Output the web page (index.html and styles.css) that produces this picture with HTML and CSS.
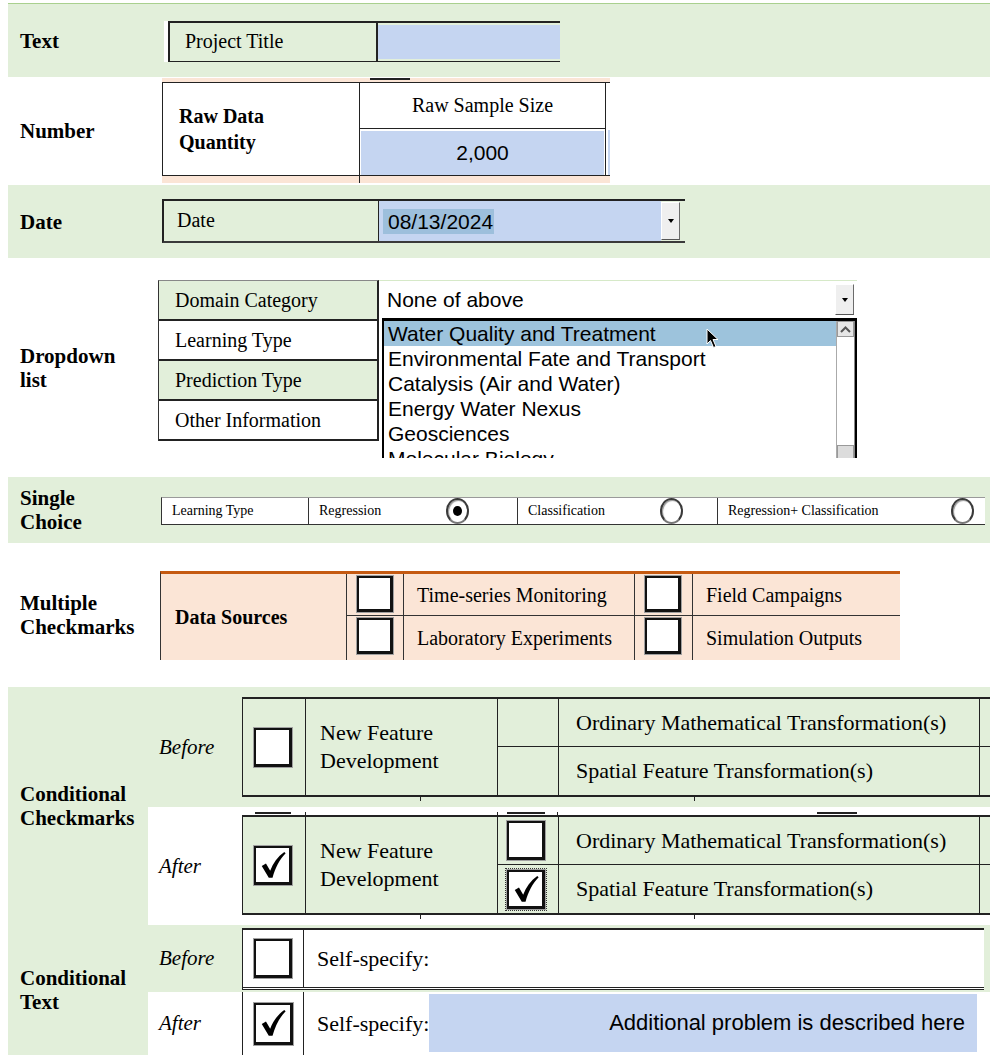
FILE: index.html
```html
<!DOCTYPE html>
<html lang="en">
<head>
    <meta charset="UTF-8">
    <meta name="viewport" content="width=device-width, initial-scale=1.0">
    <title>Form Field Types</title>
    <link rel="stylesheet" href="styles.css">
</head>
<body>
<div class="page">

    <!-- Text -->
    <div class="row row-text green">
        <div class="row-label">Text</div>
        <div class="row-body">
            <div class="snip-text">
                <div class="text-name">Project Title</div>
                <div class="text-value"></div>
            </div>
        </div>
    </div>

    <!-- Number -->
    <div class="row row-number">
        <div class="row-label">Number</div>
        <div class="row-body">
            <div class="snip-num">
                <div class="num-strip-top"><span class="num-tick"></span></div>
                <div class="num-table">
                    <div class="num-name">Raw Data<br>Quantity</div>
                    <div class="num-col">
                        <div class="num-head">Raw Sample Size</div>
                        <div class="num-value">2,000</div>
                    </div>
                    <div class="num-edge"><span></span><span class="blue"></span></div>
                </div>
                <div class="num-strip-bottom"><span></span></div>
            </div>
        </div>
    </div>

    <!-- Date -->
    <div class="row row-date green">
        <div class="row-label">Date</div>
        <div class="row-body">
            <div class="snip-date">
                <div class="date-name">Date</div>
                <div class="date-value"><span class="date-sel">08/13/2024</span></div>
                <div class="drop-btn"></div>
                <div class="date-tail"></div>
            </div>
        </div>
    </div>

    <!-- Dropdown list -->
    <div class="row row-drop">
        <div class="row-label label-drop">Dropdown<br>list</div>
        <div class="row-body">
            <div class="snip-drop">
                <div class="drop-names">
                    <div class="drop-name green">Domain Category</div>
                    <div class="drop-name">Learning Type</div>
                    <div class="drop-name green">Prediction Type</div>
                    <div class="drop-name">Other Information</div>
                </div>
                <div class="drop-field">
                    <div class="drop-select">
                        <span>None of above</span>
                        <div class="drop-btn"></div>
                    </div>
                    <div class="drop-list">
                        <div class="drop-items">
                            <div class="drop-item active">Water Quality and Treatment</div>
                            <div class="drop-item">Environmental Fate and Transport</div>
                            <div class="drop-item">Catalysis (Air and Water)</div>
                            <div class="drop-item">Energy Water Nexus</div>
                            <div class="drop-item">Geosciences</div>
                            <div class="drop-item">Molecular Biology</div>
                        </div>
                        <div class="drop-scroll">
                            <div class="scroll-up">
                                <svg width="13" height="9" viewBox="0 0 13 9"><path d="M2 7 L6.5 2.5 L11 7" fill="none" stroke="#555" stroke-width="2"/></svg>
                            </div>
                            <div class="scroll-track"></div>
                            <div class="scroll-thumb"></div>
                        </div>
                        <svg class="cursor" width="13" height="21" viewBox="0 0 13 21">
                            <path d="M1 1 L1 16 L4.5 12.5 L7.5 19.5 L10 18.5 L7 11.5 L12 11.5 Z" fill="#000" stroke="#fff" stroke-width="1"/>
                        </svg>
                    </div>
                </div>
            </div>
        </div>
    </div>

    <div class="gap"></div>

    <!-- Single choice -->
    <div class="row row-single green">
        <div class="row-label">Single<br>Choice</div>
        <div class="row-body">
            <div class="snip-radio">
                <div class="rad-cell rad-name">Learning Type</div>
                <div class="rad-cell rad-reg">Regression<span class="radio on"></span></div>
                <div class="rad-cell rad-cls">Classification<span class="radio"></span></div>
                <div class="rad-cell rad-both">Regression+ Classification<span class="radio"></span></div>
            </div>
        </div>
    </div>

    <!-- Multiple checkmarks -->
    <div class="row row-multi">
        <div class="row-label">Multiple<br>Checkmarks</div>
        <div class="row-body">
            <div class="snip-multi">
                <div class="multi-name">Data Sources</div>
                <div class="multi-grid">
                    <div class="multi-box top"><span class="box"></span></div>
                    <div class="multi-text top line">Time-series Monitoring</div>
                    <div class="multi-box top"><span class="box"></span></div>
                    <div class="multi-text top">Field Campaigns</div>
                    <div class="multi-box"><span class="box"></span></div>
                    <div class="multi-text line">Laboratory Experiments</div>
                    <div class="multi-box"><span class="box"></span></div>
                    <div class="multi-text">Simulation Outputs</div>
                </div>
            </div>
        </div>
    </div>

    <!-- Conditional checkmarks -->
    <div class="row row-cond green">
        <div class="row-label">Conditional<br>Checkmarks</div>
        <div class="row-body cond-body">
            <div class="band band-cc-before">
                <div class="band-label">Before</div>
                <div class="cc-wrap">
                    <div class="cc-table">
                        <div class="cc-box cc-span"><span class="box cc-size"></span></div>
                        <div class="cc-feat cc-span">New Feature<br>Development</div>
                        <div class="cc-sub"></div>
                        <div class="cc-opt">Ordinary Mathematical Transformation(s)</div>
                        <div class="cc-end"></div>
                        <div class="cc-sub cc-last"></div>
                        <div class="cc-opt cc-last">Spatial Feature Transformation(s)</div>
                        <div class="cc-end cc-last"></div>
                    </div>
                    <div class="ticks-below"><span class="tick tick-a"></span><span class="tick tick-b"></span></div>
                </div>
            </div>
            <div class="band band-cc-after">
                <div class="band-label">After</div>
                <div class="cc-wrap">
                    <div class="ticks-above">
                        <span class="seg seg-a"></span>
                        <span class="vt vt-a"></span>
                        <span class="vt vt-b"></span>
                        <span class="seg seg-b"></span>
                        <span class="vt vt-c"></span>
                        <span class="seg seg-c"></span>
                    </div>
                    <div class="cc-table cc-after">
                        <div class="cc-box cc-span">
                            <span class="box cc-size">
                                <svg class="tick-mark" viewBox="0 0 32 32"><path d="M4 17 L8.5 14.5 L13 22 C16 14 21 7 28 2 L29.5 3.5 C23 10 18.5 19 15.5 29.5 L11.5 29.5 Z"/></svg>
                            </span>
                        </div>
                        <div class="cc-feat cc-span">New Feature<br>Development</div>
                        <div class="cc-sub"><span class="box cc-size"></span></div>
                        <div class="cc-opt">Ordinary Mathematical Transformation(s)</div>
                        <div class="cc-end"></div>
                        <div class="cc-sub cc-last">
                            <span class="box cc-size focused">
                                <svg class="tick-mark" viewBox="0 0 32 32"><path d="M4 17 L8.5 14.5 L13 22 C16 14 21 7 28 2 L29.5 3.5 C23 10 18.5 19 15.5 29.5 L11.5 29.5 Z"/></svg>
                            </span>
                        </div>
                        <div class="cc-opt cc-last">Spatial Feature Transformation(s)</div>
                        <div class="cc-end cc-last"></div>
                    </div>
                    <div class="ticks-below"><span class="tick tick-a"></span><span class="tick tick-b"></span></div>
                </div>
            </div>
        </div>
    </div>

    <!-- Conditional text -->
    <div class="row row-ctext green">
        <div class="row-label">Conditional<br>Text</div>
        <div class="row-body cond-body">
            <div class="band band-ct-before">
                <div class="band-label">Before</div>
                <div class="ct-table ct-before">
                    <div class="ct-box"><span class="box cc-size"></span></div>
                    <div class="ct-text">Self-specify:</div>
                </div>
            </div>
            <div class="band band-ct-after">
                <div class="band-label">After</div>
                <div class="ct-table ct-after">
                    <div class="ct-box">
                        <span class="box ct-size">
                            <svg class="tick-mark" viewBox="0 0 32 32"><path d="M4 17 L8.5 14.5 L13 22 C16 14 21 7 28 2 L29.5 3.5 C23 10 18.5 19 15.5 29.5 L11.5 29.5 Z"/></svg>
                        </span>
                    </div>
                    <div class="ct-text">Self-specify:<div class="ct-input">Additional problem is described here</div></div>
                </div>
            </div>
        </div>
    </div>

</div>
</body>
</html>
```

FILE: styles.css
```css
* {
    box-sizing: border-box;
}
body {
    margin: 0;
    background-color: #fff;
    font-family: "Liberation Serif", "Times New Roman", serif;
    color: #000;
}
.page {
    padding: 3px 0 0 8px;
    width: 990px;
}
.green {
    background-color: #e2efda;
}
.row {
    display: flex;
}
.row-label {
    width: 140px;
    flex-shrink: 0;
    padding-left: 12px;
    font-size: 21px;
    font-weight: bold;
    line-height: 24px;
    align-self: center;
}
.row-body {
    flex: 1;
}

/* section heights */
.row-text {
    height: 74px;
    border-top: 1px solid #a9d08e;
}
.row-text .row-body { padding-top: 17px; }
.row-number { height: 108px; }
.row-number .row-body { padding-top: 1px; }
.row-date { height: 73px; }
.row-date .row-body { padding-top: 14px; }
.row-drop { height: 212px; }
.row-drop .row-body { padding-top: 22px; }
.label-drop { padding-top: 8px; }
.gap { height: 7px; }
.row-single { height: 66px; }
.row-single .row-body { padding-top: 20px; }
.row-multi { height: 144px; }
.row-multi .row-body { padding-top: 28px; }
.row-cond { height: 238px; }
.row-ctext { height: 130px; }

/* text */
.snip-text {
    margin-left: 16px;
    width: 396px;
    height: 41px;
    display: flex;
    border-left: 4px solid #fff;
}
.text-name {
    width: 210px;
    background-color: #e2efda;
    border: 2px solid #222;
    border-right: 2px solid #222;
    border-bottom-width: 1px;
    padding-left: 15px;
    font-size: 20px;
    line-height: 36px;
}
.text-value {
    flex: 1;
    border-top: 2px solid #222;
    border-bottom: 1px solid #222;
    background-color: #c5d5f1;
    box-shadow: inset 0 2px 0 #e2efda, inset 0 -2px 0 #e2efda;
}

/* number */
.snip-num {
    margin-left: 14px;
    width: 448px;
}
.num-strip-top {
    height: 4px;
    background-color: #fbe5d6;
    display: flex;
}
.num-tick {
    margin-left: 208px;
    width: 40px;
    height: 2px;
    background-color: #222;
    border-right: 1px solid #222;
}
.num-table {
    display: flex;
    height: 94px;
    border-top: 1px solid #222;
    border-bottom: 1px solid #222;
}
.num-name {
    width: 198px;
    border-left: 1px solid #222;
    border-right: 1px solid #222;
    padding-left: 16px;
    font-size: 20px;
    font-weight: bold;
    line-height: 26px;
    display: flex;
    align-items: center;
}
.num-col {
    width: 246px;
    border-right: 1px solid #222;
    display: flex;
    flex-direction: column;
}
.num-head {
    height: 46px;
    border-bottom: 1px solid #222;
    text-align: center;
    font-size: 20px;
    line-height: 44px;
}
.num-value {
    flex: 1;
    margin: 2px 1px 0 1px;
    background-color: #c5d5f1;
    font-family: "Liberation Sans", Arial, sans-serif;
    font-size: 21px;
    display: flex;
    align-items: center;
    justify-content: center;
}
.num-edge {
    flex: 1;
    display: flex;
    flex-direction: column;
}
.num-edge span {
    flex: 1;
}
.num-edge .blue {
    margin: 2px 0 0 2px;
    background-color: #c5d5f1;
}
.num-strip-bottom {
    height: 7px;
    background-color: #fbe5d6;
}
.num-strip-bottom span {
    display: block;
    width: 198px;
    height: 100%;
    border-right: 1px solid #222;
}

/* date */
.snip-date {
    margin-left: 14px;
    width: 523px;
    height: 44px;
    display: flex;
    border-top: 2px solid #222;
    border-bottom: 2px solid #3a3a3a;
    border-left: 2px solid #222;
}
.date-name {
    width: 215px;
    border-right: 1px solid #222;
    background-color: #e2efda;
    padding-left: 13px;
    font-size: 20px;
    line-height: 38px;
}
.date-value {
    width: 282px;
    background-color: #c5d5f1;
    padding-left: 4px;
    display: flex;
    align-items: center;
    font-family: "Liberation Sans", Arial, sans-serif;
    font-size: 21px;
}
.date-sel {
    background-color: #9dbfdc;
    padding: 0 1px 0 5px;
    line-height: 25px;
}
.date-tail {
    flex: 1;
}
.drop-btn {
    width: 19px;
    margin: 1px 0;
    background-color: #efefef;
    border: 1px solid #fff;
    border-right-color: #6b6b6b;
    border-bottom-color: #555;
    display: flex;
    align-items: center;
    justify-content: center;
}
.drop-btn::after {
    content: "";
    border-left: 3px solid transparent;
    border-right: 3px solid transparent;
    border-top: 4px solid #000;
}

/* dropdown */
.snip-drop {
    margin-left: 10px;
    display: flex;
    align-items: flex-start;
}
.drop-names {
    width: 221px;
    border-left: 1px solid #333;
    border-right: 2px solid #222;
    border-top: 1px solid #888;
}
.drop-name {
    height: 40px;
    border-bottom: 2px solid #222;
    padding-left: 16px;
    font-size: 20px;
    line-height: 38px;
}
.drop-field {
    width: 478px;
}
.drop-select {
    height: 38px;
    border-top: 1px solid #d6e9c8;
    background-color: #fff;
    display: flex;
    align-items: center;
    padding-left: 8px;
    font-family: "Liberation Sans", Arial, sans-serif;
    font-size: 21px;
}
.drop-select .drop-btn {
    margin-left: auto;
    margin-right: 3px;
    height: 31px;
}
.drop-list {
    position: relative;
    margin-left: 3px;
    width: 475px;
    height: 140px;
    border: 2px solid #000;
    border-top-width: 3px;
    border-bottom: none;
    background-color: #fff;
    display: flex;
    overflow: hidden;
}
.drop-items {
    flex: 1;
}
.drop-item {
    height: 25px;
    line-height: 25px;
    padding-left: 4px;
    font-family: "Liberation Sans", Arial, sans-serif;
    font-size: 21px;
    white-space: nowrap;
}
.drop-item.active {
    background-color: #9dc3dc;
}
.drop-scroll {
    width: 19px;
    border-left: 1px solid #aaa;
    border-right: 1px solid #888;
    display: flex;
    flex-direction: column;
}
.scroll-up {
    height: 16px;
    background-color: #e6e6e6;
    border: 1px solid #999;
    display: flex;
    align-items: center;
    justify-content: center;
}
.scroll-track {
    flex: 1;
}
.scroll-thumb {
    height: 13px;
    background-color: #dcdcdc;
    border: 1px solid #999;
    border-bottom: none;
}
.cursor {
    position: absolute;
    left: 322px;
    top: 7px;
}

/* single choice */
.snip-radio {
    margin-left: 13px;
    width: 824px;
    height: 28px;
    display: flex;
    background-color: #fff;
    border-top: 1px solid #9a9a9a;
    border-bottom: 1px solid #333;
    border-left: 1px solid #333;
}
.rad-cell {
    display: flex;
    align-items: center;
    padding-left: 10px;
    font-size: 14px;
    border-right: 1px solid #333;
}
.rad-name { width: 147px; }
.rad-reg { width: 209px; }
.rad-cls { width: 200px; }
.rad-both {
    flex: 1;
    border-right: none;
}
.radio {
    margin-left: auto;
    width: 23px;
    height: 26px;
    border-radius: 50%;
    border: 2px solid #3a3a3a;
    border-bottom-color: #777;
    box-shadow: inset 1px 1px 1px #999;
    background-color: #fff;
    display: flex;
    align-items: center;
    justify-content: center;
}
.radio.on::after {
    content: "";
    width: 9px;
    height: 10px;
    border-radius: 50%;
    background-color: #000;
}
.rad-reg .radio { margin-right: 48px; }
.rad-cls .radio { margin-right: 34px; }
.rad-both .radio { margin-right: 11px; }

/* multiple checkmarks */
.snip-multi {
    margin-left: 12px;
    width: 740px;
    height: 89px;
    display: flex;
    background-color: #fbe5d6;
    border-top: 3px solid #c55a11;
    border-left: 1px solid #333;
}
.multi-name {
    width: 186px;
    border-right: 1px solid #333;
    padding-left: 14px;
    font-size: 20px;
    font-weight: bold;
    display: flex;
    align-items: center;
}
.multi-grid {
    flex: 1;
    display: grid;
    grid-template-columns: 57px 231px 58px 1fr;
    grid-template-rows: 42px 1fr;
}
.multi-box {
    padding: 2px 0 0 10px;
    border-right: 1px solid #333;
}
.multi-text {
    padding-left: 13px;
    font-size: 20px;
    display: flex;
    align-items: center;
}
.multi-text.top {
    padding-top: 2px;
}
.multi-text.line {
    border-right: 1px solid #333;
}
.multi-grid .top {
    border-bottom: 1px solid #333;
}
.box {
    display: flex;
    align-items: center;
    justify-content: center;
    width: 36px;
    height: 36px;
    background-color: #fff;
    border: 2px solid #111;
    border-right-width: 3px;
    border-bottom-width: 3px;
    box-shadow: 0 0 0 1px #a0a0a0;
}
.tick-mark {
    width: 30px;
    height: 30px;
    fill: #000;
}

/* conditional */
.cond-body {
    display: flex;
    flex-direction: column;
}
.band {
    display: flex;
    align-items: flex-start;
}
.band-label {
    width: 94px;
    flex-shrink: 0;
    padding-left: 11px;
    font-size: 21px;
    font-style: italic;
    align-self: center;
}
.band-cc-before {
    height: 120px;
}
.band-cc-before .cc-wrap {
    margin-top: 10px;
}
.band-cc-after {
    height: 118px;
    background-color: #fff;
}
.band-cc-after .cc-wrap {
    margin-top: 5px;
}
.cc-wrap {
    flex: 1;
}
.cc-table {
    display: grid;
    grid-template-columns: 63px 192px 61px 421px 1fr;
    grid-template-rows: 48px 48px;
    background-color: #e2efda;
    border-top: 2px solid #222;
    border-bottom: 2px solid #222;
    border-left: 1px solid #222;
}
.cc-span {
    grid-row: span 2;
}
.cc-box {
    border-right: 1px solid #222;
    padding-left: 11px;
    display: flex;
    align-items: center;
}
.cc-size {
    width: 38px;
    height: 39px;
}
.cc-feat {
    border-right: 1px solid #222;
    padding-left: 14px;
    font-size: 22px;
    line-height: 28px;
    display: flex;
    align-items: center;
}
.cc-sub {
    border-right: 1px solid #222;
    border-bottom: 1px solid #222;
    padding-left: 9px;
    display: flex;
    align-items: center;
}
.cc-opt {
    border-right: 1px solid #222;
    border-bottom: 1px solid #222;
    padding-left: 17px;
    font-size: 22px;
    display: flex;
    align-items: center;
}
.cc-end {
    border-bottom: 1px solid #222;
}
.cc-table .cc-last {
    border-bottom: none;
}
.focused {
    outline: 1px dotted #333;
    outline-offset: 1px;
}
.ticks-below {
    display: flex;
    height: 4px;
}
.tick {
    width: 1px;
    background-color: #222;
}
.tick-a { margin-left: 178px; }
.tick-b { margin-left: 273px; }
.ticks-above {
    display: flex;
    align-items: flex-start;
    height: 3px;
}
.seg {
    height: 2px;
    background-color: #222;
}
.vt {
    width: 1px;
    height: 3px;
    background-color: #222;
}
.seg-a { margin-left: 13px; width: 36px; }
.vt-a { margin-left: 14px; }
.vt-b { margin-left: 191px; }
.seg-b { margin-left: 9px; width: 38px; }
.vt-c { margin-left: 12px; }
.seg-c { margin-left: 259px; width: 40px; }

.band-ct-before {
    height: 67px;
}
.band-ct-before .ct-table {
    margin-top: 3px;
}
.band-ct-after {
    height: 63px;
    background-color: #fff;
}
.ct-table {
    display: flex;
    background-color: #fff;
    border-left: 1px solid #222;
}
.ct-before {
    width: 742px;
    height: 62px;
    border-top: 2px solid #222;
    border-bottom: 3px double #222;
}
.ct-after {
    flex: 1;
    height: 63px;
}
.ct-box {
    width: 61px;
    border-right: 1px solid #222;
    padding-left: 11px;
    display: flex;
    align-items: center;
}
.ct-size {
    width: 39px;
    height: 42px;
}
.ct-text {
    flex: 1;
    padding-left: 13px;
    font-size: 22px;
    display: flex;
    align-items: center;
}
.ct-input {
    flex: 1;
    align-self: stretch;
    margin: 2px 13px 3px 0;
    padding-right: 12px;
    background-color: #c5d5f1;
    font-family: "Liberation Sans", Arial, sans-serif;
    font-size: 22px;
    display: flex;
    align-items: center;
    justify-content: flex-end;
}
```
